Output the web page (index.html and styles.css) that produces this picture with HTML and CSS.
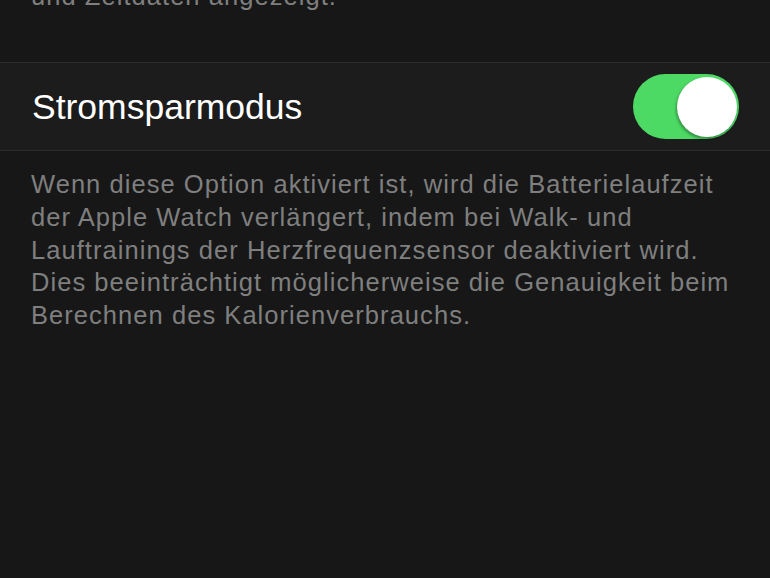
FILE: index.html
```html
<!DOCTYPE html>
<html lang="de">
<head>
<meta charset="utf-8">
<link rel="stylesheet" href="styles.css">
</head>
<body>
<div class="screen">
  <p class="note prev">und Zeitdaten angezeigt.</p>
  <div class="row">
    <span class="label">Stromsparmodus</span>
    <div class="toggle on"><div class="knob"></div></div>
  </div>
  <p class="note">Wenn diese Option aktiviert ist, wird die Batterielaufzeit<br>der Apple Watch verlängert, indem bei Walk- und<br>Lauftrainings der Herzfrequenzsensor deaktiviert wird.<br>Dies beeinträchtigt möglicherweise die Genauigkeit beim<br>Berechnen des Kalorienverbrauchs.</p>
</div>
</body>
</html>
```

FILE: styles.css
```css
html, body {
  margin: 0;
  padding: 0;
  background: #171717;
  overflow: hidden;
}
.screen {
  width: 770px;
  height: 578px;
  font-family: "Liberation Sans", Arial, sans-serif;
}
.note {
  margin: 0;
  padding: 0 10px 0 31px;
  color: #7f7f7f;
  font-size: 25.5px;
  line-height: 32.75px;
  letter-spacing: 1.05px;
  white-space: nowrap;
}
.prev {
  margin-top: -20px;
  height: 82px;
}
.row {
  display: flex;
  align-items: center;
  justify-content: space-between;
  height: 87px;
  padding: 0 31px 0 32px;
  background: #1c1c1d;
  border-top: 1px solid #2c2c2c;
  border-bottom: 1px solid #2c2c2c;
  margin-bottom: 17px;
}
.label {
  color: #ffffff;
  font-size: 35.5px;
  margin-top: 2px;
}
.toggle {
  width: 106px;
  height: 65px;
  border-radius: 33px;
  background: #4cd964;
  display: flex;
  align-items: center;
  justify-content: flex-end;
  padding: 0 2px;
  box-sizing: border-box;
}
.knob {
  width: 60px;
  height: 60px;
  border-radius: 50%;
  background: #ffffff;
  box-shadow: -1px 2px 3px rgba(0,0,0,0.35);
}
```
